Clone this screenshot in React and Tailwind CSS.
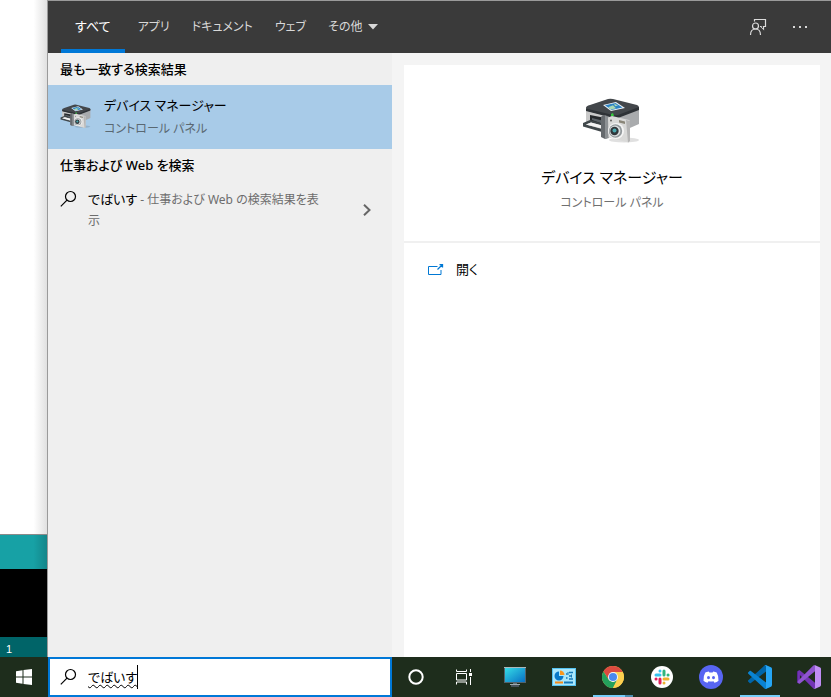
import { useState } from "react";

const TABS = ["アプリ", "ドキュメント", "ウェブ"];

function SearchIcon({ className }) {
  return (
    <svg className={className} width="18" height="18" viewBox="0 0 18 18" fill="none" stroke="currentColor" strokeWidth="1.2" aria-hidden="true">
      <circle cx="10.500" cy="6.500" r="5" />
      <path d="M7 10.100.800 16.400" />
    </svg>
  );
}

function FeedbackIcon() {
  return (
    <svg width="18" height="18" viewBox="0 0 18 18" fill="none" stroke="#dcdcdc" strokeWidth="1.200" aria-hidden="true">
      <path d="M5.500 3.500v-2h11v7h-2v2.500L12 8.500h-1" />
      <circle cx="6.500" cy="8" r="3" />
      <path d="M1.500 17c0-3.600 2-6 5-6s5 2.400 5 6" />
    </svg>
  );
}

function DevicesIcon({ className }) {
  return (
    <svg className={className} viewBox="0 0 60 50" aria-hidden="true">
      <ellipse cx="42" cy="43" rx="15" ry="2.5" fill="#000" opacity=".12" />
      <path d="M4 13 34 18v20L4 27z" fill="#c9c9c9" />
      <path d="M34 20 57 11v16L34 37z" fill="#a9abad" />
      <path d="M4 11Q4 9 8 8L26 2q2-.7 5 0l24 6q2 .6 2 3L36 20q-2 .8-5 .2L6 14q-2-.5-2-3z" fill="#43474b" />
      <path d="M4 11.500 31 18q3 .6 5 0l21-8v3l-21 8q-2 .7-5 0L4 14z" fill="#2e3236" />
      <path d="m21 8 13-3 9 6-14 3z" fill="#eef5fb" />
      <path d="m23 8.300 10.500-2.300 7 4.600-11 2.400z" fill="#2c82c4" />
      <path d="m26 10.300 5-2 3 3-5 1.200zM32 6.500l4 2-3 .8z" fill="#a9d7b3" />
      <path d="m8 18 13 2.500v7L8 24z" fill="#26292c" />
      <path d="m10 21 10 2.500v3L10 23z" fill="#5d6469" />
      <path d="m1 26 7-3 12 3.500v2L9 25.500l-5 2 16 4.500v3L1 29.500z" fill="#41484b" />
      <path d="m4 27.500 5-2 11 3v3z" fill="#f4f4f4" />
      <path d="M19 20q1-2 4-2l4 1.500v21L23 42l-4-2z" fill="#666a6e" />
      <path d="M23 18.500 27 20v21l-4 1z" fill="#8d9194" />
      <path d="m29 17 2-1 1 3h-3z" fill="#35c83c" />
      <path d="M26 20.500 30 19l17 4 1 1v20l-1.500 1.500-20-5z" fill="#d9d9d8" />
      <path d="m44 23 4 1v20l-2 1.500z" fill="#b5b5b5" />
      <path d="m37 23 6 1.500V27l-6-1.500z" fill="#8a8678" />
      <circle cx="34" cy="34" r="8" fill="#f5f5f5" />
      <circle cx="33.500" cy="34" r="6.700" fill="#92989b" />
      <circle cx="33" cy="34" r="5.400" fill="#dcdfe0" />
      <circle cx="32.500" cy="34" r="4.200" fill="#30373b" />
      <circle cx="32.500" cy="33.500" r="2" fill="#4aa7ae" />
      <circle cx="29" cy="23.500" r=".9" fill="#555" />
    </svg>
  );
}

function OpenIcon() {
  return (
    <svg width="16" height="12" viewBox="0 0 16 12" fill="none" stroke="#0078d4" aria-hidden="true">
      <path d="M9.500 2.500h-9v8h12.500V6" />
      <path d="m9.500 5.500 5-5M11.500.500h3v3" strokeWidth="1.300" />
    </svg>
  );
}

function WindowsLogo() {
  return (
    <svg width="16" height="16" viewBox="0 0 16 16" fill="#fff" aria-hidden="true">
      <path d="M0 2.200 6.500 1.300v6.200H0zM7.500 1.100 16 0v7.500H7.500zM0 8.500h6.500v6.200L0 13.800zM7.500 8.500H16V16l-8.500-1.100z" />
    </svg>
  );
}

function CortanaIcon() {
  return (
    <svg width="16" height="16" viewBox="0 0 16 16" fill="none" aria-hidden="true">
      <circle cx="8" cy="8" r="6.700" stroke="#fff" strokeWidth="2" />
    </svg>
  );
}

function TaskViewIcon() {
  return (
    <svg width="16" height="16" viewBox="0 0 16 16" fill="none" stroke="#fff" aria-hidden="true">
      <path d="M.500.500v2h10v-2M.500 15.500v-2.500h10v2.500M.500 4.500h10v6.500H.500zM14.500 0v3M14.500 8v8" />
      <path d="M13 4h3v3h-3z" fill="#fff" stroke="none" />
    </svg>
  );
}

function MonitorIcon() {
  return (
    <svg width="22" height="20" viewBox="0 0 22 20" aria-hidden="true">
      <defs>
        <linearGradient id="screen" x1="0" y1="0" x2="1" y2="1">
          <stop offset="0" stopColor="#35dce6" />
          <stop offset="1" stopColor="#0870c4" />
        </linearGradient>
      </defs>
      <path d="M0 0h22v16H0z" fill="#53636c" />
      <path d="M0 0h22v1H0z" fill="#aab9bc" />
      <path d="M1 1h20v14H1z" fill="url(#screen)" />
      <path d="M9 16h4v2H9z" fill="#65747e" />
      <path d="M6 17h10v1H6z" fill="#9daab1" />
      <path d="M7 18h8v2H7z" fill="#46525a" />
    </svg>
  );
}

function ControlPanelIcon() {
  return (
    <svg width="24" height="18" viewBox="0 0 24 18" fill="none" aria-hidden="true">
      <path d="M0 0h24v18H0z" fill="#55c3f0" />
      <path d="M1 1h22v16H1z" fill="#a9e6fc" />
      <path d="M7 3.500V8h4.500A4.500 4.500 0 1 1 7 3.500z" fill="#0878c8" />
      <path d="M8 2.500A4.500 4.500 0 0 1 12.500 7H8z" fill="#f9961d" />
      <path d="M14 6h1.500M14 10h1.500M17 4.500h4M17 8h3M17 11h4" stroke="#1478b8" strokeWidth="1.500" />
      <path d="M16 4v3M19.500 6.500v3" stroke="#1478b8" />
      <path d="M3 14.500h8" stroke="#f58b18" strokeWidth="2" />
      <path d="M12 14.500h9" stroke="#1478b8" strokeWidth="2" />
    </svg>
  );
}

function ChromeIcon() {
  return (
    <svg width="22" height="22" viewBox="0 0 48 48" aria-hidden="true">
      <circle cx="24" cy="24" r="24" fill="#fdd04f" />
      <path d="M24 13h21.300A24 24 0 0 0 3.200 12l11.300 17.500z" fill="#dc4b40" />
      <path d="M3.200 12A24 24 0 0 0 24 48l9.500-18.500L24 35l-9.500-5.500z" fill="#24a05b" />
      <path d="M24 48 33.500 29.500 35 24l-2-11h12.300A24 24 0 0 1 24 48z" fill="#fdd04f" />
      <circle cx="24" cy="24" r="11" fill="#f4f4f4" />
      <circle cx="24" cy="24" r="8.800" fill="#4b89ee" />
    </svg>
  );
}

function SlackIcon() {
  return (
    <svg width="22" height="22" viewBox="0 0 22 22" fill="none" strokeLinecap="round" strokeWidth="3" aria-hidden="true">
      <circle cx="11" cy="11" r="11" fill="#fff" />
      <path d="M5 9h4M9 4.900v.2" stroke="#36c5f0" />
      <path d="M13 5v4M17 9h.1" stroke="#2eb67d" />
      <path d="M13 13h4M13 17v.1" stroke="#ecb22e" />
      <path d="M9 13v4M5 13h.1" stroke="#e01e5a" />
    </svg>
  );
}

function DiscordIcon() {
  return (
    <svg width="24" height="24" viewBox="0 0 24 24" aria-hidden="true">
      <circle cx="12" cy="12" r="12" fill="#5865f2" />
      <path d="M9.800 6.500Q7.500 6.800 6.300 7.600 4.200 11 4.500 15.800 6 17.200 8.500 17.700l1-1.500q2.500.6 5 0l1 1.500q2.500-.5 4-1.900.3-4.800-1.800-8.200-1.200-.8-3.500-1.100l-.6 1.100h-3.200z" fill="#fff" />
      <ellipse cx="9.500" cy="12.600" rx="1.500" ry="1.700" fill="#5865f2" />
      <ellipse cx="14.500" cy="12.600" rx="1.500" ry="1.700" fill="#5865f2" />
    </svg>
  );
}

function CodeIcon() {
  return (
    <svg width="24" height="24" viewBox="0 0 100 100" aria-hidden="true">
      <path d="M96.500 10.800 75.900.9c-2.400-1.100-5.300-.7-7.100 1.200L1.300 63.600c-1.800 1.600-1.800 4.500 0 6.100l5.500 5c1.500 1.400 3.700 1.500 5.300.3l81.200-61.600c2.700-2.100 6.700-.1 6.700 3.300 0-2.500-1.400-4.900-3.500-5.900z" fill="#0065a9" />
      <path d="m96.500 89.200-20.600 9.900c-2.400 1.100-5.300.7-7.100-1.200L1.300 36.400c-1.800-1.600-1.800-4.500 0-6.100l5.500-5c1.500-1.400 3.700-1.500 5.300-.3l81.200 61.600c2.700 2.100 6.700.1 6.700-3.300 0 2.500-1.400 4.900-3.500 5.900z" fill="#0a83d2" />
      <path d="M75.900 99.100c-2.400 1.200-5.300.7-7.100-1.200 2.300 2.300 6.200.7 6.200-2.600V4.700c0-3.300-3.900-4.900-6.200-2.600 1.800-1.900 4.700-2.300 7.100-1.200l20.600 9.900c2.100 1 3.500 3.200 3.500 5.600v67.200c0 2.400-1.400 4.600-3.500 5.600z" fill="#26a6f5" />
    </svg>
  );
}

function VisualStudioIcon() {
  return (
    <svg width="24" height="24" viewBox="0 0 100 100" aria-hidden="true">
      <path d="M0 30q0-4 3-5l9-3v56l-9-3q-3-1-3-5z" fill="#52218a" />
      <path d="m3 25 6-2.500q3-1 5 1l61 50V97q-3 4-7 1L12 42v28l-9 5z" fill="#7334b4" />
      <path d="m3 75 6 2.500q3 1 5-1l61-50V3q-3-4-7-1L3 68z" fill="#8f55cf" />
      <path d="M68.800 2.100q3-3 7.100-1.200l20.600 9.900Q100 13 100 16.400v67.200q0 4-3.500 5.600l-20.600 9.900q-4 2-7.100-1.200 6.200 2 6.200-2.600V4.700q0-5-6.200-2.600z" fill="#c08df4" />
    </svg>
  );
}

const APPS = [
  { name: "PC", Icon: MonitorIcon },
  { name: "コントロール パネル", Icon: ControlPanelIcon },
  { name: "Chrome", Icon: ChromeIcon, state: "group" },
  { name: "Slack", Icon: SlackIcon },
  { name: "Discord", Icon: DiscordIcon },
  { name: "Visual Studio Code", Icon: CodeIcon, state: "open" },
  { name: "Visual Studio", Icon: VisualStudioIcon },
];

function TaskbarApp({ name, Icon, state }) {
  return (
    <button aria-label={name} className="relative flex h-10 w-[49px] shrink-0 items-center justify-center">
      <Icon />
      {state && (
        <span className="absolute right-1 bottom-0 left-[5px] flex h-0.5">
          <span className="flex-1 bg-[#76cdf8]" />
          {state === "group" && <span className="w-2 bg-[#4d8dae]" />}
        </span>
      )}
    </button>
  );
}

function Header() {
  return (
    <header className="flex h-[52px] shrink-0 items-stretch justify-between bg-[#3a3a3a] pr-2.5 pl-[13px] text-[12px] text-[#d8d8d8]">
      <nav className="flex items-stretch">
        <button className="mr-0.5 border-y-4 border-t-transparent border-b-[#0078d7] px-3.5 text-[13px] text-white">すべて</button>
        {TABS.map((tab) => (
          <button key={tab} className="px-[11px]">{tab}</button>
        ))}
        <button className="flex items-center gap-1.5 px-[11px]">
          その他
          <svg width="10" height="6" viewBox="0 0 10 6" fill="currentColor" aria-hidden="true">
            <path d="M0 0h10L5 5.500z" />
          </svg>
        </button>
      </nav>
      <div className="flex items-center">
        <button aria-label="フィードバック" className="flex w-[42px] justify-center"><FeedbackIcon /></button>
        <button aria-label="オプション" className="flex w-[42px] justify-center">
          <svg width="14" height="2" viewBox="0 0 14 2" fill="#d8d8d8" aria-hidden="true">
            <path d="M0 0h2v2H0zM6 0h2v2H6zM12 0h2v2h-2z" />
          </svg>
        </button>
      </div>
    </header>
  );
}

function Results() {
  return (
    <section className="w-[344px] shrink-0 bg-[#efefef]">
      <h2 className="px-3 text-[13px] leading-8 font-medium">最も一致する検索結果</h2>
      <button className="flex h-16 w-full items-center gap-3 bg-[#a8cbe8] px-3 text-left">
        <DevicesIcon className="h-8 w-8" />
        <span>
          <span className="block text-[13px] leading-6">デバイス マネージャー</span>
          <span className="block text-[12px] leading-6 text-[#5a6872]">コントロール パネル</span>
        </span>
      </button>
      <h2 className="px-3 text-[13px] leading-8 font-medium">仕事および Web を検索</h2>
      <button className="flex w-full items-start px-3 pt-2 text-left">
        <SearchIcon className="mt-px mr-2.5 shrink-0" />
        <span className="flex-1 text-[12px] leading-[21px] text-[#6d6d6d]">
          <span className="text-[13px] text-black">でばいす</span> - 仕事および Web の検索結果を表示
        </span>
        <svg className="mr-2 ml-9 shrink-0 self-center" width="10" height="12" viewBox="0 0 10 12" fill="none" stroke="#666" strokeWidth="2" aria-hidden="true">
          <path d="m2 .8 5.500 5.200L2 11.200" />
        </svg>
      </button>
    </section>
  );
}

function Details() {
  return (
    <section className="flex min-w-0 flex-1 flex-col bg-[#f4f4f4] pt-3 pr-[11px] pl-3">
      <div className="flex flex-1 flex-col bg-white">
        <div className="flex h-[178px] flex-col items-center border-b-2 border-[#f0f0f0] pt-8">
          <DevicesIcon className="h-[50px] w-[60px]" />
          <h1 className="mt-4 text-[15px] leading-7">デバイス マネージャー</h1>
          <p className="text-[12px] leading-6 text-[#707070]">コントロール パネル</p>
        </div>
        <button className="flex h-[54px] items-center gap-3 px-6 text-[13px]">
          <OpenIcon />
          開く
        </button>
      </div>
    </section>
  );
}

function SearchBox() {
  const [query, setQuery] = useState("でばいす");
  return (
    <label className="relative flex h-10 w-[344px] shrink-0 items-center border-2 border-[#0078d7] bg-white pl-2.5 text-black">
      <SearchIcon className="mr-2.5 shrink-0" />
      <input
        aria-label="検索"
        value={query}
        onChange={(e) => setQuery(e.target.value)}
        className="h-9 min-w-0 flex-1 bg-transparent text-[13px] leading-9 underline decoration-black decoration-wavy decoration-1 underline-offset-2 outline-none [text-decoration-skip-ink:none]"
      />
      <span className="absolute top-1.5 left-[87px] h-6 w-px bg-black" />
    </label>
  );
}

export default function App() {
  return (
    <div className="flex min-h-screen flex-col overflow-hidden bg-white font-['Noto_Sans','Noto_Sans_CJK_JP',sans-serif] text-black [font-feature-settings:'palt']">
      <main className="flex flex-1">
        <aside className="flex w-12 shrink-0 flex-col">
          <div className="flex-1 border-b border-[#8a8a8a] bg-linear-to-r from-white from-70% to-[#dedede]" />
          <div className="h-[34px] bg-linear-to-r from-[#17a1a5] from-70% to-[#138488]" />
          <div className="h-[68px] bg-black" />
          <div className="h-5 bg-[#006468] px-1.5 font-['Liberation_Sans',sans-serif] text-[11px] leading-6 text-white">1</div>
        </aside>
        <div className="-ml-px flex min-w-0 flex-1 flex-col border-t border-l border-[#9a9a9a]">
          <Header />
          <div className="flex flex-1">
            <Results />
            <Details />
          </div>
        </div>
      </main>
      <footer className="flex h-10 shrink-0 bg-[#1e2d1c]">
        <button aria-label="スタート" className="flex w-12 shrink-0 items-center justify-center"><WindowsLogo /></button>
        <SearchBox />
        <button aria-label="Cortana" className="flex w-12 shrink-0 items-center justify-center"><CortanaIcon /></button>
        <button aria-label="タスク ビュー" className="flex w-12 shrink-0 items-center justify-center"><TaskViewIcon /></button>
        <div className="flex min-w-0 flex-1 overflow-hidden pl-0.5">
          {APPS.map((app) => (
            <TaskbarApp key={app.name} {...app} />
          ))}
        </div>
      </footer>
    </div>
  );
}
